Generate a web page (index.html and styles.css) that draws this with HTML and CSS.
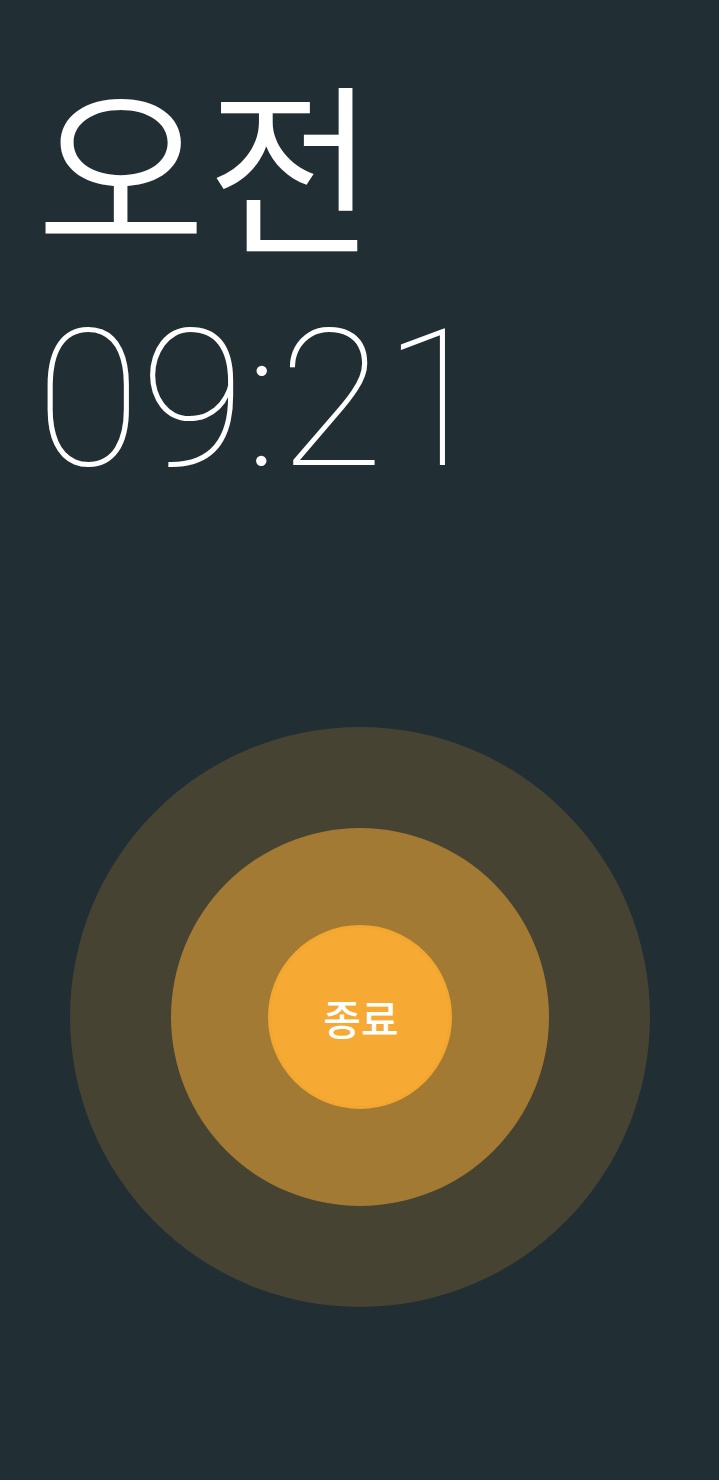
FILE: index.html
```html
<!DOCTYPE html>
<html lang="ko">
<head>
<meta charset="utf-8">
<link rel="stylesheet" href="styles.css">
</head>
<body>
<main class="screen">
  <section class="time">
    <div class="ampm">오전</div>
    <div class="clock">09:21</div>
  </section>
  <section class="dismiss">
    <div class="ring outer">
      <div class="ring middle">
        <button class="ring inner">종료</button>
      </div>
    </div>
  </section>
</main>
</body>
</html>
```
FILE: styles.css
```css
html, body {
  margin: 0;
  padding: 0;
  background: #212e33;
}
.screen {
  width: 719px;
  height: 1480px;
  display: flex;
  flex-direction: column;
  font-family: "Noto Sans CJK KR", "Noto Sans", sans-serif;
  color: #ffffff;
}
.time {
  padding: 50px 0 0 36px;
  display: flex;
  flex-direction: column;
}
.ampm {
  font-size: 185px;
  line-height: 220px;
  font-weight: 350;
}
.clock {
  font-family: Roboto, sans-serif;
  font-weight: 100;
  font-size: 191px;
  line-height: 200px;
  margin-top: 30px;
}
.dismiss {
  display: flex;
  justify-content: center;
  padding-top: 227px;
  padding-left: 1px;
}
.ring {
  border-radius: 50%;
  display: flex;
  align-items: center;
  justify-content: center;
  box-sizing: border-box;
}
.outer {
  width: 580px;
  height: 580px;
  background: #464333;
}
.middle {
  width: 378px;
  height: 378px;
  background: #a37a33;
}
.inner {
  width: 184px;
  height: 184px;
  background: #f6a933;
  border: 3px solid #f3a731;
  color: #ffffff;
  font-family: "Noto Sans CJK KR", sans-serif;
  font-size: 41px;
  font-weight: 500;
  padding: 0 0 0 2px;
}
```
